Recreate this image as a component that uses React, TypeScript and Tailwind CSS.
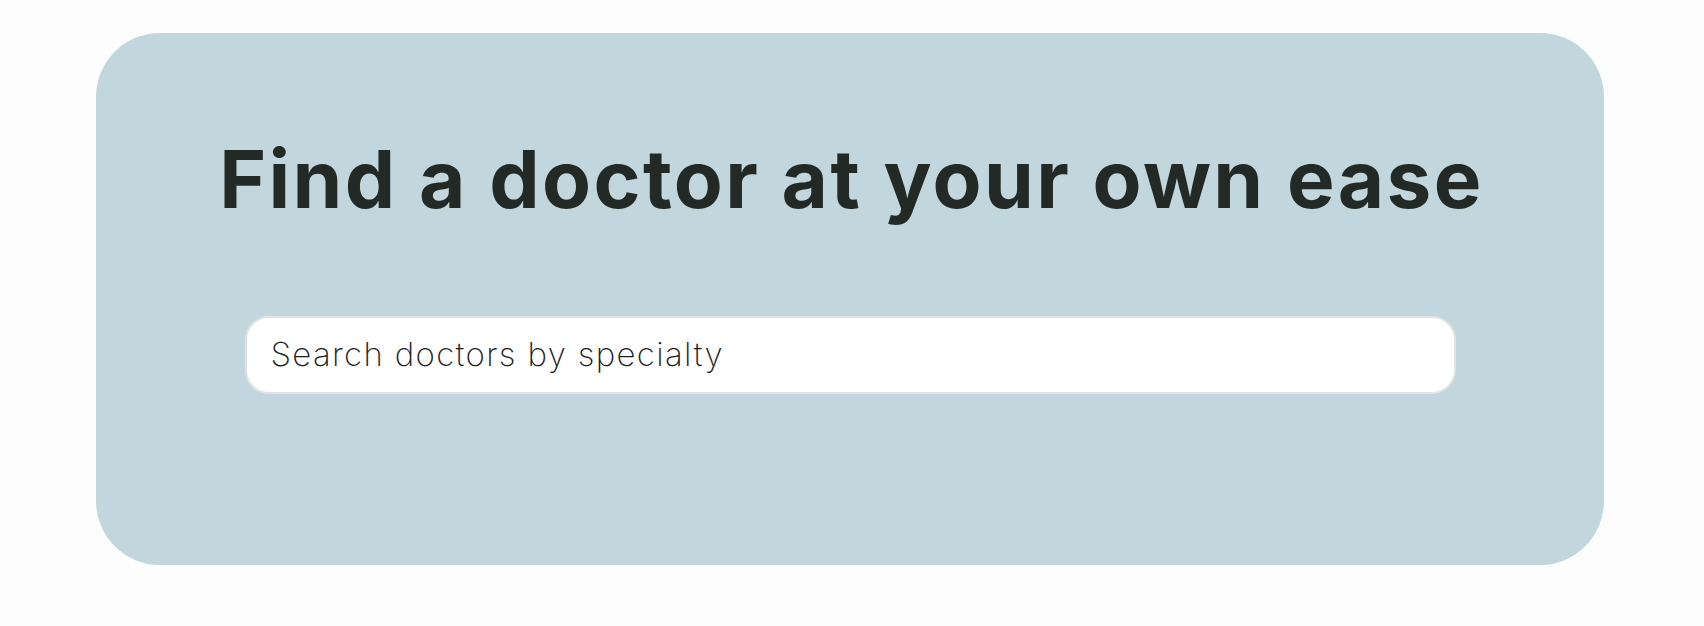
export default function App() {
  return (
    <div className="min-h-[626px] w-full bg-[#fdfdfd] pt-[33px] font-['Inter',sans-serif]">
      <section className="ml-[96px] flex h-[532px] w-[1508px] flex-col items-center rounded-[64px] bg-[#c1d7dd]">
        <h1 className="mt-[106px] ml-[3px] text-[80px] font-bold leading-[80px] tracking-[0.03em] text-[#232a26]">
          Find a doctor at your own ease
        </h1>
        <div className="mt-[97px] flex h-[78px] w-[1211px] items-center rounded-[24px] border-2 border-[#e2e4e4] bg-white px-[24px]">
          <input
            type="text"
            placeholder="Search doctors by specialty"
            className="w-full bg-transparent text-[33px] font-extralight tracking-[0.04em] text-[#232a26] outline-none placeholder:text-[#1e1e1e]"
          />
        </div>
      </section>
    </div>
  );
}
